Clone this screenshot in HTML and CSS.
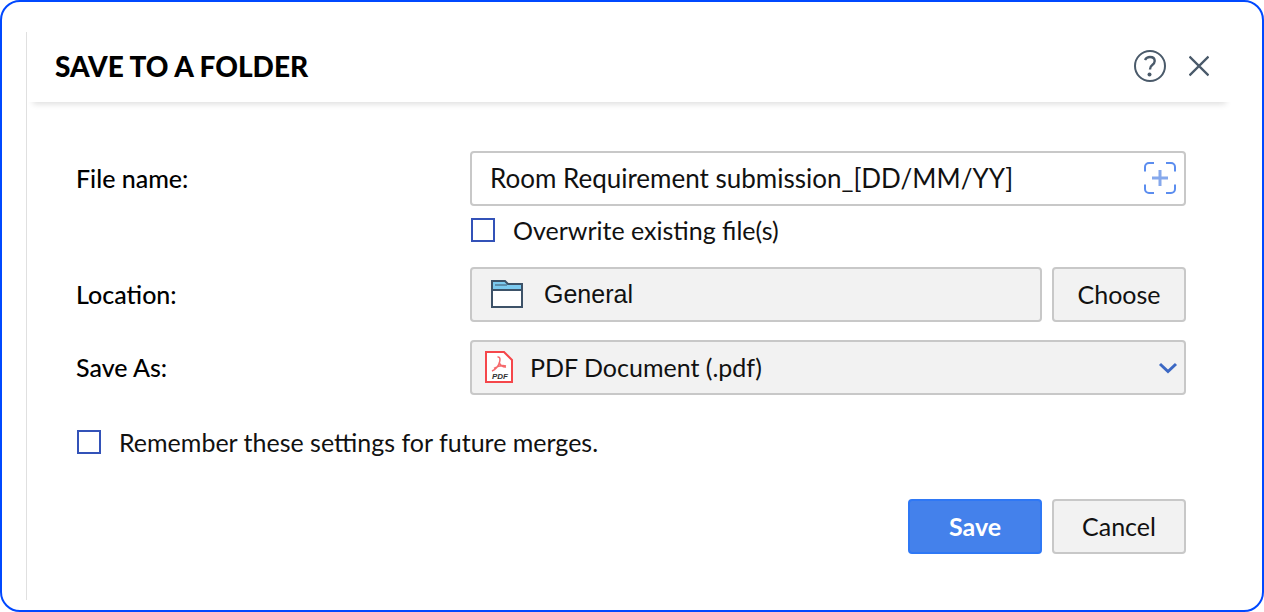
FILE: index.html
```html
<!DOCTYPE html>
<html lang="en">
<head>
    <meta charset="UTF-8">
    <meta name="viewport" content="width=device-width, initial-scale=1.0">
    <title>Save to a Folder</title>
    <link rel="stylesheet" href="styles.css">
</head>
<body>
    <div class="frame">
        <div class="dialog" role="dialog" aria-labelledby="dialog-title">
            <header class="dialog-header">
                <h1 id="dialog-title">SAVE TO A FOLDER</h1>
                <div class="header-actions">
                    <button type="button" class="icon-button" aria-label="Help">
                        <svg width="34" height="34" viewBox="0 0 34 34" fill="none" stroke="#4a5a6a" stroke-width="2">
                            <circle cx="17" cy="17" r="15"/>
                            <path d="M12 11C13 9 14.800 8 17 8c2.800 0 4.700 1.500 4.700 4 0 2.100-1.300 3.200-2.700 4.300-1.400 1-2 1.900-2 4.200" stroke-width="2.400"/>
                            <circle cx="16.500" cy="25.500" r="2" fill="#4a5a6a" stroke="none"/>
                        </svg>
                    </button>
                    <button type="button" class="icon-button" aria-label="Close">
                        <svg width="20" height="34" viewBox="0 0 20 34" fill="none" stroke="#4a5a6a" stroke-width="2.400">
                            <path d="M0.500 7.500l19 19M19.500 7.500l-19 19"/>
                        </svg>
                    </button>
                </div>
            </header>

            <form class="dialog-body">
                <div class="row">
                    <label class="row-label" for="file-name">File name:</label>
                    <div class="field">
                        <input type="text" id="file-name" class="control file-input" value="Room Requirement submission_[DD/MM/YY]">
                        <button type="button" class="icon-button insert-button" aria-label="Insert field">
                            <svg width="34" height="34" viewBox="0 0 34 34" fill="none" stroke="#5b8def" stroke-width="2">
                                <path d="M2 10.500V6a4 4 0 0 1 4-4h5M23 2h5a4 4 0 0 1 4 4v4.500M32 23.500V28a4 4 0 0 1-4 4h-5M11 32H6a4 4 0 0 1-4-4v-4.500"/>
                                <path d="M17 9v16M9 17h16" stroke="#85a8ec" stroke-width="3"/>
                            </svg>
                        </button>
                    </div>
                </div>

                <div class="row overwrite-row">
                    <label class="check">
                        <input type="checkbox">
                        <span>Overwrite existing file(s)</span>
                    </label>
                </div>

                <div class="row">
                    <span class="row-label">Location:</span>
                    <div class="location">
                        <div class="control location-box">
                            <svg width="34" height="30" viewBox="0 0 34 30" stroke="#3d5268" stroke-width="2">
                                <path d="M2 9h30v19H2z" fill="#fff"/>
                                <path d="M2 11V2h13l3 3h14v6z" fill="#7ccaf0"/>
                                <path d="M5 6h12" fill="none" stroke-width="1"/>
                            </svg>
                            <span>General</span>
                        </div>
                        <button type="button" class="button">Choose</button>
                    </div>
                </div>

                <div class="row">
                    <label class="row-label" for="save-as">Save As:</label>
                    <div class="field">
                        <select id="save-as" class="control type-select">
                            <option>PDF Document (.pdf)</option>
                        </select>
                        <svg class="pdf-icon" width="28" height="32" viewBox="0 0 28 32" fill="none">
                            <path d="M1 1h18l8 8v22H1z" fill="#fff" stroke="#f5474b" stroke-width="2"/>
                            <path d="M12.500 6c2.500-.500 3 2 2 5.500-1 3-4 7-7.500 8.500M14 11c1 3 4 5.500 7 5M9 17.500c3.500-2.200 8-3.500 12-2.500" stroke="#f5696c" stroke-width="1.500"/>
                            <text x="7" y="28" class="pdf-text">PDF</text>
                        </svg>
                        <svg class="chevron" width="20" height="12" viewBox="0 0 20 12" fill="none" stroke="#3c68c4" stroke-width="3">
                            <path d="M2 2l8 7.500L18 2"/>
                        </svg>
                    </div>
                </div>

                <label class="check">
                    <input type="checkbox">
                    <span>Remember these settings for future merges.</span>
                </label>

                <div class="actions">
                    <button type="submit" class="button primary">Save</button>
                    <button type="button" class="button">Cancel</button>
                </div>
            </form>
        </div>
    </div>
</body>
</html>
```
FILE: styles.css
```css
* {
    margin: 0;
    padding: 0;
    box-sizing: border-box;
}

body {
    font-family: Lato, "Liberation Sans", sans-serif;
    font-size: 25px;
    line-height: 32px;
    color: #111;
    background-color: #fff;
}

svg {
    display: block;
    flex: none;
}

.frame {
    display: flex;
    min-height: 100vh;
    padding: 30px 30px 10px 24px;
    border: 2px solid #0048ff;
    border-radius: 20px;
}

.dialog {
    flex: 1;
    border-left: 1px solid #e0e0e0;
}

.dialog-header {
    display: flex;
    align-items: center;
    justify-content: space-between;
    height: 70px;
    padding: 0 23px 2px 28px;
    box-shadow: 0 8px 6px -6px #dedede;
}

.dialog-header h1 {
    font-size: 28px;
    font-weight: 900;
    color: #000;
}

.header-actions {
    display: flex;
    gap: 22px;
}

.icon-button {
    border: none;
    background: none;
    cursor: pointer;
}

.dialog-body {
    display: flex;
    flex-direction: column;
    gap: 18px;
    padding: 49px 46px 0 49px;
}

.row {
    display: grid;
    grid-template-columns: 394px 1fr;
    align-items: center;
}

.row-label {
    padding-bottom: 2px;
    font-weight: 500;
    color: #000;
}

.field {
    position: relative;
}

.control {
    width: 100%;
    height: 55px;
    border: 2px solid #c8c8c8;
    border-radius: 4px;
    background-color: #f2f2f2;
    font: inherit;
    color: inherit;
}

.file-input {
    padding: 0 56px 2px 18px;
    background-color: #fff;
    font-size: 26px;
}

.insert-button {
    position: absolute;
    top: 10px;
    right: 9px;
}

.overwrite-row {
    margin: -10px 0 3px;
}

.overwrite-row .check {
    grid-column: 2;
}

.check {
    display: flex;
    align-items: center;
    gap: 18px;
    padding-left: 1px;
}

.check input {
    width: 24px;
    height: 24px;
    appearance: none;
    border: 2px solid #3352b8;
    background-color: #fff;
}

.check input:checked {
    background-color: #3352b8;
}

.location {
    display: flex;
    gap: 10px;
}

.location-box {
    display: flex;
    flex: 1;
    align-items: center;
    gap: 20px;
    padding: 0 18px 2px;
    font-family: "Liberation Sans", Arial, sans-serif;
}

.button {
    width: 134px;
    height: 55px;
    padding-bottom: 2px;
    border: 2px solid #c8c8c8;
    border-radius: 4px;
    background-color: #f2f2f2;
    font: inherit;
    color: inherit;
    cursor: pointer;
}

.button:hover {
    background-color: #e9e9e9;
}

.type-select {
    padding: 0 50px 2px 58px;
    appearance: none;
}

.pdf-icon,
.chevron {
    position: absolute;
    pointer-events: none;
}

.pdf-icon {
    top: 11px;
    left: 15px;
}

.chevron {
    top: 22px;
    right: 8px;
}

.pdf-text {
    font: italic 900 8px "Liberation Sans", sans-serif;
    fill: #333;
}

.dialog-body > .check {
    margin-top: 13px;
}

.actions {
    display: flex;
    justify-content: flex-end;
    gap: 10px;
    margin-top: 23px;
}

.button.primary {
    border-color: #2f78f5;
    background-color: #4481eb;
    font-weight: 700;
    color: #fff;
}
```
